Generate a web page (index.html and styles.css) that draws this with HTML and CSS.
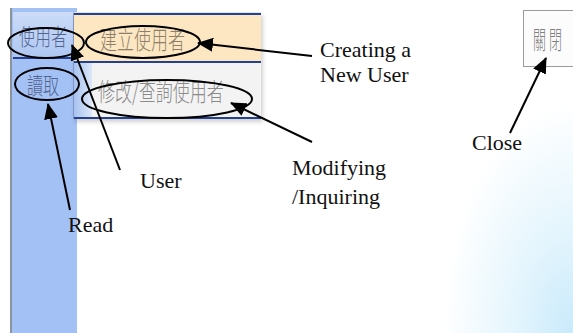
FILE: index.html
```html
<!DOCTYPE html>
<html lang="zh-Hant">
<head>
    <meta charset="UTF-8">
    <meta name="viewport" content="width=device-width, initial-scale=1.0">
    <title>使用者</title>
    <link rel="stylesheet" href="styles.css">
</head>
<body>
    <div class="stage">
        <nav class="sidebar">
            <div class="side-btn active"><span class="cjk">使用者</span></div>
            <div class="side-btn"><span class="cjk">讀取</span></div>
        </nav>

        <ul class="flyout">
            <li class="flyout-item create"><span class="cjk">建立使用者</span></li>
            <li class="flyout-item modify"><span class="strip"></span><span class="cjk">修改/查詢使用者</span></li>
        </ul>

        <button class="close-btn"><span class="cjk">關閉</span></button>

        <!-- annotations -->
        <svg class="notes" width="573" height="333" viewBox="0 0 573 333">
            <defs>
                <marker id="head" markerUnits="userSpaceOnUse" markerWidth="16" markerHeight="14" refX="15" refY="7" orient="auto">
                    <path d="M0,0 L16,7 L0,14 z" fill="#000"/>
                </marker>
            </defs>
            <g fill="none" stroke="#000" stroke-width="2">
                <ellipse cx="46" cy="43" rx="38" ry="15"/>
                <ellipse cx="47" cy="84" rx="32" ry="16"/>
                <ellipse cx="143" cy="42" rx="57" ry="16"/>
                <ellipse cx="167" cy="99" rx="85" ry="19"/>
                <line x1="312" y1="56" x2="198" y2="43" marker-end="url(#head)"/>
                <line x1="312" y1="142" x2="231" y2="103" marker-end="url(#head)"/>
                <line x1="510" y1="133" x2="546" y2="58" marker-end="url(#head)"/>
                <line x1="120" y1="170" x2="72" y2="45" marker-end="url(#head)"/>
                <line x1="70" y1="210" x2="48" y2="104" marker-end="url(#head)"/>
            </g>
        </svg>

        <div class="label lbl-create">Creating a<br>New User</div>
        <div class="label lbl-modify">Modifying<br>/Inquiring</div>
        <div class="label lbl-close">Close</div>
        <div class="label lbl-user">User</div>
        <div class="label lbl-read">Read</div>
    </div>
</body>
</html>
```

FILE: styles.css
```css
body {
    margin: 0;
    padding: 0;
    width: 573px;
    height: 333px;
    overflow: hidden;
    background: radial-gradient(ellipse 130px 230px at 100% 100%, #c9eafb 0%, #e4f5fd 45%, #ffffff 100%);
    font-family: "Liberation Serif", serif;
}

.stage {
    position: relative;
    width: 573px;
    height: 333px;
    display: flex;
    align-items: flex-start;
    padding-top: 8px;
    box-sizing: border-box;
}

.cjk {
    font-family: "Noto Sans CJK TC", "Noto Sans CJK SC", sans-serif;
    font-weight: 300;
    display: inline-block;
    transform: scaleY(1.45);
}

.sidebar {
    margin-left: 10px;
    width: 67px;
    height: 325px;
    background: #a4c1f5;
    border-left: 2px solid #8d939e;
    display: flex;
    flex-direction: column;
    padding-top: 4px;
    box-sizing: border-box;
}

.side-btn {
    height: 38px;
    display: flex;
    align-items: center;
    justify-content: center;
    font-size: 16px;
    color: #52648e;
    margin-right: 4px;
    margin-left: 1px;
}

.side-btn.active {
    height: 45px;
    background: linear-gradient(to bottom, #ccdcf8, #aec7f2);
    border-bottom: 2px solid #23418f;
    margin-bottom: 6px;
}

.flyout {
    position: absolute;
    left: 73px;
    top: 12px;
    width: 187px;
    margin: 0;
    padding: 0;
    list-style: none;
    border-top: 1px solid #dde4f2;
    border-left: 1px solid #7f95c6;
    box-shadow: 2px 3px 4px rgba(0, 0, 0, 0.18);
    background: #f3f3f3;
}

.flyout-item {
    display: flex;
    align-items: center;
    font-size: 17px;
}

.flyout-item.create {
    height: 46px;
    background: #fde7c2;
    border-top: 2px solid #23418f;
    border-bottom: 2px solid #23418f;
    padding-left: 26px;
    color: #8c7f6a;
}

.flyout-item.modify {
    height: 54px;
    background: #f3f3f3;
    border-bottom: 2px solid #23418f;
    color: #8a8a8a;
}

.strip {
    width: 18px;
    height: 100%;
    background: linear-gradient(to right, #a7c2f0, #dde7f8);
    margin-right: 6px;
}

.close-btn {
    position: absolute;
    left: 523px;
    top: 10px;
    width: 52px;
    height: 57px;
    background: #fcfcfc;
    border: 1px solid #9a9a9a;
    padding: 0 0 0 9px;
    text-align: left;
    color: #7d7d7d;
    font-size: 13px;
    letter-spacing: 3px;
}

.close-btn .cjk {
    transform: scaleY(1.9);
}

.notes {
    position: absolute;
    left: 0;
    top: 0;
}

.label {
    position: absolute;
    font-size: 22px;
    line-height: 25px;
    color: #111;
    white-space: nowrap;
}

.lbl-create {
    left: 320px;
    top: 37px;
}

.lbl-modify {
    left: 292px;
    top: 153px;
    line-height: 29px;
}

.lbl-close {
    left: 472px;
    top: 130px;
}

.lbl-user {
    left: 140px;
    top: 168px;
}

.lbl-read {
    left: 68px;
    top: 212px;
}
```
